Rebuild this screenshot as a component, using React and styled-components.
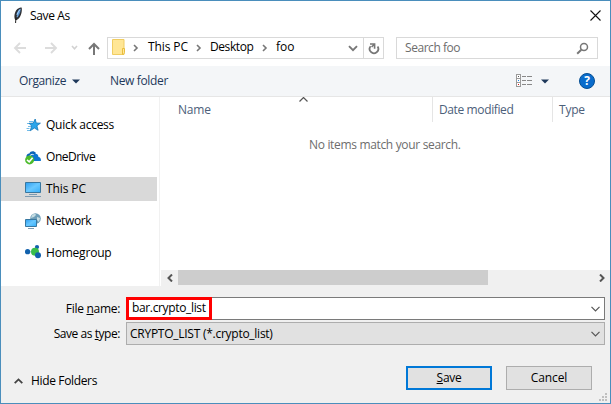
import React from "react";
import styled, { createGlobalStyle } from "styled-components";

const GlobalStyle = createGlobalStyle`
  * { box-sizing: border-box; }
  body { margin: 0; overflow: hidden; }
  svg { display: block; flex: none; }
`;

const Dialog = styled.div`
  width: 611px;
  height: 404px;
  display: flex;
  flex-direction: column;
  border: 1px solid #4a8ebc;
  background: #fff;
  color: #000;
  font: 12px/16px "Open Sans", "Noto Sans", sans-serif;
`;

const Label = styled.span`
  white-space: nowrap;
  letter-spacing: ${(p) => p.$tracking || 0}px;
`;

const TitleBar = styled.header`
  height: 36px;
  flex: none;
  display: flex;
  align-items: flex-start;
  padding: 5px 9px 0 11px;
`;
const Title = styled(Label)`
  margin: 2px auto 0 7px;
`;
const CloseButton = styled.div`
  margin-top: 4px;
`;

const NavBar = styled.nav`
  height: 22px;
  flex: none;
  display: flex;
`;
const NavArrows = styled.div`
  width: 106px;
  display: flex;
  align-items: center;
  padding-left: 12px;
`;
const AddressBox = styled.div`
  width: 277px;
  display: flex;
  border: 1px solid #d9d9d9;
`;
const Crumbs = styled.div`
  flex: 1;
  display: flex;
  align-items: flex-start;
  padding-left: 4px;
`;
const Crumb = styled(Label)`
  width: ${(p) => p.$width}px;
  margin-top: 1px;
`;
const CrumbArrow = styled.div`
  width: ${(p) => p.$width}px;
  padding: 6px 0 0 ${(p) => p.$inset || 0}px;
`;
const RefreshCell = styled.div`
  width: 20px;
  border-left: 1px solid #d9d9d9;
  padding: 4px 0 0 4px;
`;
const SearchBox = styled.div`
  width: 202px;
  margin-left: 12px;
  display: flex;
  justify-content: space-between;
  border: 1px solid #d9d9d9;
  padding: 2px 8px 0 8px;
  color: #6d6d6d;
`;
const SearchGlyph = styled.div`
  margin-top: 2px;
`;

const Toolbar = styled.div`
  height: 31px;
  flex: none;
  margin-top: 7px;
  display: flex;
  align-items: center;
  padding: 0 15px 0 18px;
  background: #f4f6f8;
  border-bottom: 1px solid #e6e6e6;
  color: #1e395b;
`;
const Command = styled.div`
  display: flex;
  align-items: center;
  gap: 6px;
  width: ${(p) => p.$width}px;
`;
const ToolbarEnd = styled.div`
  margin-left: auto;
  display: flex;
  align-items: center;
`;
const ViewGlyph = styled.div`
  margin-bottom: 2px;
`;
const ViewCaret = styled.div`
  margin: 0 30px 0 9px;
`;

const Body = styled.main`
  height: 189px;
  flex: none;
  display: flex;
`;
const Sidebar = styled.aside`
  width: 159px;
  border-right: 1px solid #f1f1f1;
  padding: 16px 2px 0 0;
  display: flex;
  flex-direction: column;
  gap: 8px;
`;
const Place = styled.div`
  height: 24px;
  flex: none;
  display: flex;
  align-items: center;
  padding-left: 24px;
  gap: 5px;
  background: ${(p) => (p.$selected ? "#d9d9d9" : "transparent")};
`;
const FileArea = styled.section`
  flex: 1;
  display: flex;
  flex-direction: column;
  padding-left: 1px;
`;
const ColumnHeads = styled.div`
  height: 25px;
  display: flex;
  color: #4c607a;
`;
const ColumnHead = styled.div`
  width: ${(p) => p.$width}px;
  display: flex;
  border-right: ${(p) => (p.$last ? 0 : 1)}px solid #e5e5e5;
  padding: 5px 0 0 ${(p) => p.$pad}px;
`;
const SortMark = styled.div`
  margin: -5px 0 0 ${(p) => p.$offset}px;
`;
const EmptyNote = styled.div`
  flex: 1;
  padding: 15px 0 0 148px;
  color: #6d6d6d;
`;
const Scrollbar = styled.div`
  height: 16px;
  display: flex;
  background: #f0f0f0;
  border-bottom: 1px solid #f0f0f0;
`;
const ScrollStep = styled.div`
  width: 17px;
  display: flex;
  align-items: center;
  justify-content: center;
`;
const ScrollThumb = styled.div`
  width: 310px;
  margin-right: auto;
  background: #cdcdcd;
`;

const Footer = styled.footer`
  flex: 1;
  display: flex;
  flex-direction: column;
  background: #f0f0f0;
  padding-top: 11px;
`;
const Field = styled.div`
  height: 23px;
  display: flex;
  margin-bottom: 2px;
`;
const FieldName = styled(Label)`
  width: 119px;
  margin: 4px 6px 0 0;
  text-align: right;
`;
const Combo = styled.div`
  width: 479px;
  display: flex;
  align-items: center;
  justify-content: space-between;
  padding: 0 4px 0 ${(p) => (p.$editable ? 0 : 3)}px;
  background: ${(p) => (p.$editable ? "#fff" : "#e1e1e1")};
  border: 1px solid ${(p) => (p.$editable ? "#7a7a7a" : "#adadad")};
`;
const Highlight = styled.div`
  width: 86px;
  height: 23px;
  margin-left: -1px;
  border: 3px solid #f00;
  padding-left: 3px;
  line-height: 16px;
`;
const Actions = styled.div`
  display: flex;
  margin-top: 19px;
`;
const FolderToggle = styled.div`
  width: 405px;
  display: flex;
  align-items: center;
  gap: 8px;
  padding: 6px 0 0 13px;
`;
const Button = styled.button`
  width: 86px;
  height: 24px;
  margin-right: 14px;
  padding: 0;
  border: ${(p) => (p.$primary ? "2px solid #0078d7" : "1px solid #adadad")};
  background: #e1e1e1;
  color: #000;
  font: inherit;
`;
const Grip = styled.div`
  margin: 3px 3px 0 auto;
`;

const Stroke = ({ w, h, d, color = "#666", width = 1.8 }) => (
  <svg width={w} height={h} viewBox={`0 0 ${w} ${h}`} fill="none" stroke={color} strokeWidth={width}>
    <path d={d} />
  </svg>
);

const FeatherIcon = () => (
  <svg width="11" height="18" viewBox="-1 0 11 18">
    <path d="M2.6 14.5C.5 11.8 1.4 6.2 3.9 3.6 5.2 2.2 7.2 1 8.6 1.6c.8 2.6-.3 7.8-2 9.9-1.1 1.2-2.4 2.6-4 3z" fill="#2f3033" />
    <path d="M3.4 12C2.6 8.5 4.7 4 7.5 2.6 8 5.8 6.1 10.5 3.4 12z" fill="#4f8fd4" />
    <path d="M3.7 11C4.2 8 5.3 5.6 7 3.5" stroke="#b8dbfa" fill="none" />
    <path d="M4 8.8C3 11 2.6 13.5 2.6 17" stroke="#222" fill="none" />
  </svg>
);
const FolderIcon = () => (
  <svg width="14" height="17" viewBox="0 0 14 17">
    <path d="M.5 1.5h11.5v15H.5z" fill="#ffe695" stroke="#f0cd62" />
    <path d="M10.5 10.5h2v4l-1 2h-1z" fill="#ffe79b" stroke="#e9bd3d" />
  </svg>
);
const RefreshIcon = () => (
  <svg width="12" height="13" viewBox="0 0 12 13" fill="none" stroke="#777">
    <path d="M2.6 4.2A4.3 4.3 0 1 0 9.6 4.6" strokeWidth="1.8" />
    <path d="M2 2h4.6v4.8M6.4 2.2L3.6 5" strokeWidth="1.6" />
  </svg>
);
const SearchIcon = () => (
  <svg width="13" height="13" viewBox="0 0 13 13" fill="none" stroke="#777">
    <circle cx="8" cy="5" r="3.5" strokeWidth="1.5" />
    <path d="M5.3 7.7L1.2 11.7" strokeWidth="2" />
  </svg>
);
const Caret = () => (
  <svg width="8" height="5" viewBox="0 0 8 5">
    <path d="M0 .5h8L4 4.5z" fill="#1e395b" />
  </svg>
);
const ViewIcon = () => (
  <svg width="16" height="13" viewBox="0 0 16 13" shapeRendering="crispEdges">
    <path d="M.5.5h4v12h-4zM.5 4.5h4M.5 8.5h4" fill="#fff" stroke="#9a9a9a" />
    <path d="M2 2h1v1H2z" fill="#555" />
    <path d="M2 6h1v1H2z" fill="#1683ef" />
    <path d="M2 10h1v1H2z" fill="#d21919" />
    <path d="M6 2.5h4M11 2.5h5M6 6.5h4M11 6.5h5M6 10.5h4M11 10.5h5" stroke="#888" />
  </svg>
);
const HelpBadge = styled.div`
  width: 16px;
  height: 16px;
  border-radius: 50%;
  border: 1px solid #064f94;
  background: #0a6ccc;
  color: #fff;
  text-align: center;
  font-weight: 700;
  font-size: 12px;
  line-height: 14px;
`;
const StarIcon = () => (
  <svg width="16" height="16" viewBox="0 0 16 16">
    <path d="M4 4.5h4M2 6.5h3M3 9.5h3M1.5 11.5h3M2 13.5h3" stroke="#74bce8" />
    <path d="M10.2 2l1 4 4.2.2-3.5 2.6 1.2 4.5-3.7-2.3-4.2 2.8 1.5-4.8L4 6.3l4.2-.2z" fill="#2ba5ea" stroke="#1679b9" strokeWidth=".8" />
  </svg>
);
const OneDriveIcon = () => (
  <svg width="16" height="16" viewBox="0 0 16 16">
    <path d="M1.5 8C1 5.4 3 4.2 4.4 4.4 5.2 2.2 8.8 1.2 11 4L8 8z" fill="#0a64b8" />
    <path d="M5 12C3.5 7.5 6 5 8.5 5.6c2-1.8 5-.6 5 2.4 2 .3 2.8 2.3 2.3 4z" fill="#0e75d0" />
    <path d="M4 8.2C5 5.6 7 5 8.6 5.6" stroke="#fff" fill="none" />
    <circle cx="4.6" cy="10.9" r="4.5" fill="#4cbb2c" />
    <path d="M2 10.8l2.2 2 3.4-4" stroke="#fff" strokeWidth="1.6" fill="none" />
  </svg>
);
const ScreenGradient = ({ id }) => (
  <linearGradient id={id} x1="0" y1="0" x2="1" y2="1">
    <stop offset="0" stopColor="#2b9df0" />
    <stop offset=".5" stopColor="#69c8ff" />
    <stop offset="1" stopColor="#35aef9" />
  </linearGradient>
);
const ComputerIcon = () => (
  <svg width="16" height="16" viewBox="0 0 16 16">
    <defs><ScreenGradient id="pcScreen" /></defs>
    <path d="M.5 1.5h15v10H.5z" fill="url(#pcScreen)" stroke="#38779f" />
    <path d="M4 13h8v1H4zM0 15h16v1H0z" fill="#7d9bb1" />
  </svg>
);
const NetworkIcon = () => (
  <svg width="16" height="16" viewBox="0 0 16 16">
    <defs><ScreenGradient id="netScreen" /></defs>
    <circle cx="10.5" cy="5.5" r="5.3" fill="#6d9eb8" />
    <path d="M7 2c2-1.6 4-1 4 0L9 4 6 5zM12 4l3 1-1 4-2-2z" fill="#c5dce2" />
    <path d="M.5 6.5h11v7H.5z" fill="url(#netScreen)" stroke="#38779f" />
    <path d="M3 15h6v1H3z" fill="#7d9bb1" />
  </svg>
);
const HomegroupIcon = () => (
  <svg width="16" height="16" viewBox="0 0 16 16">
    <path d="M2.5 6.7L9 7l3-5.5M10 8l3 3" stroke="#a6c8c5" fill="none" />
    <circle cx="2.6" cy="6.7" r="2.6" fill="#1261ad" />
    <circle cx="12" cy="2.1" r="2.1" fill="#1261ad" />
    <circle cx="10" cy="6.7" r="4" fill="#39bd4b" />
    <circle cx="13" cy="10.2" r="3" fill="#1261ad" />
  </svg>
);
const GripIcon = () => (
  <svg width="8" height="8" viewBox="0 0 8 8">
    <path d="M6 0h2v2H6zM3 3h2v2H3zM6 3h2v2H6zM0 6h2v2H0zM3 6h2v2H3zM6 6h2v2H6z" fill="#bfbfbf" />
  </svg>
);

const chevronRight = <Stroke w={6} h={8} d="M1 1l3 3-3 3" color="#777" width={1.6} />;
const comboArrow = <Stroke w={9} h={6} d="M.5 .8l4 4 4-4" color="#555" width={1.2} />;

const PLACES = [
  { name: "Quick access", icon: <StarIcon />, tracking: -0.27 },
  { name: "OneDrive", icon: <OneDriveIcon />, tracking: -0.45 },
  { name: "This PC", icon: <ComputerIcon />, tracking: -0.1, selected: true },
  { name: "Network", icon: <NetworkIcon />, tracking: -0.35 },
  { name: "Homegroup", icon: <HomegroupIcon />, tracking: -0.2 },
];

export default function App() {
  return (
    <>
      <GlobalStyle />
      <Dialog>
        <TitleBar>
          <FeatherIcon />
          <Title $tracking={-0.35}>Save As</Title>
          <CloseButton>
            <Stroke w={11} h={11} d="M.5 .5l10 10M10.5 .5l-10 10" color="#111" width={1.1} />
          </CloseButton>
        </TitleBar>

        <NavBar>
          <NavArrows>
            <Stroke w={30} h={12} d="M13 6H2M7 1L2 6l5 5" color="#dcdcdc" width={1.9} />
            <Stroke w={27} h={12} d="M2 6h11M8 1l5 5-5 5" color="#dcdcdc" width={1.9} />
            <Stroke w={18} h={6} d="M2 1l2.5 2.7L7 1" color="#d2d2d2" width={1.6} />
            <Stroke w={12} h={13} d="M6 13V2M1 7l5-5 5 5" color="#777" width={2} />
          </NavArrows>
          <AddressBox>
            <Crumbs>
              <FolderIcon />
              <CrumbArrow $width={22} $inset={7}>{chevronRight}</CrumbArrow>
              <Crumb $width={48} $tracking={-0.1}>This PC</Crumb>
              <CrumbArrow $width={14}>{chevronRight}</CrumbArrow>
              <Crumb $width={52} $tracking={-0.42}>Desktop</Crumb>
              <CrumbArrow $width={14}>{chevronRight}</CrumbArrow>
              <Crumb $width={72}>foo</Crumb>
              <CrumbArrow $width={10}>
                <Stroke w={10} h={8} d="M1 2.2l4 4 4-4" color="#777" width={1.9} />
              </CrumbArrow>
            </Crumbs>
            <RefreshCell><RefreshIcon /></RefreshCell>
          </AddressBox>
          <SearchBox>
            <Label $tracking={-0.45}>Search foo</Label>
            <SearchGlyph><SearchIcon /></SearchGlyph>
          </SearchBox>
        </NavBar>

        <Toolbar>
          <Command $width={91}>
            <Label $tracking={-0.4}>Organize</Label>
            <Caret />
          </Command>
          <Command $width={70}>
            <Label $tracking={-0.35}>New folder</Label>
          </Command>
          <ToolbarEnd>
            <ViewGlyph><ViewIcon /></ViewGlyph>
            <ViewCaret><Caret /></ViewCaret>
            <HelpBadge>?</HelpBadge>
          </ToolbarEnd>
        </Toolbar>

        <Body>
          <Sidebar>
            {PLACES.map((p) => (
              <Place key={p.name} $selected={p.selected}>
                {p.icon}
                <Label $tracking={p.tracking}>{p.name}</Label>
              </Place>
            ))}
          </Sidebar>
          <FileArea>
            <ColumnHeads>
              <ColumnHead $width={272} $pad={17}>
                <Label $tracking={-0.2}>Name</Label>
                <SortMark $offset={88}>
                  <Stroke w={9} h={5} d="M.5 4.5l4-4 4 4" color="#555" width={1.2} />
                </SortMark>
              </ColumnHead>
              <ColumnHead $width={120} $pad={6}>
                <Label $tracking={-0.38}>Date modified</Label>
              </ColumnHead>
              <ColumnHead $width={57} $pad={6} $last>
                <Label $tracking={-0.2}>Type</Label>
              </ColumnHead>
            </ColumnHeads>
            <EmptyNote>
              <Label $tracking={-0.33}>No items match your search.</Label>
            </EmptyNote>
            <Scrollbar>
              <ScrollStep><Stroke w={6} h={8} d="M5 .5L1.5 4 5 7.5" color="#555" width={2} /></ScrollStep>
              <ScrollThumb />
              <ScrollStep><Stroke w={6} h={8} d="M1 .5L4.5 4 1 7.5" color="#555" width={2} /></ScrollStep>
            </Scrollbar>
          </FileArea>
        </Body>

        <Footer>
          <Field>
            <FieldName $tracking={-0.3}>File <u>n</u>ame:</FieldName>
            <Combo $editable>
              <Highlight><Label $tracking={-0.35}>bar.crypto_list</Label></Highlight>
              {comboArrow}
            </Combo>
          </Field>
          <Field>
            <FieldName $tracking={-0.45}>Save as <u>t</u>ype:</FieldName>
            <Combo>
              <Label $tracking={-0.26}>CRYPTO_LIST (*.crypto_list)</Label>
              {comboArrow}
            </Combo>
          </Field>
          <Actions>
            <FolderToggle>
              <Stroke w={9} h={6} d="M.7 5.2l3.8-3.8 3.8 3.8" color="#444" width={1.8} />
              <Label $tracking={-0.35}>Hide Folders</Label>
            </FolderToggle>
            <Button $primary><Label $tracking={-0.3}><u>S</u>ave</Label></Button>
            <Button><Label $tracking={-0.1}>Cancel</Label></Button>
          </Actions>
          <Grip><GripIcon /></Grip>
        </Footer>
      </Dialog>
    </>
  );
}
